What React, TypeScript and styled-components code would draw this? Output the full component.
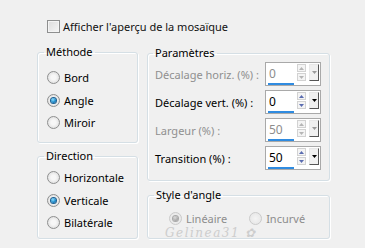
import * as React from 'react';
import styled, { createGlobalStyle } from 'styled-components';

const Global = createGlobalStyle`
  html, body {
    margin: 0;
    padding: 0;
    background: #f0f0f0;
  }
  body {
    font-family: "Noto Sans", "Liberation Sans", sans-serif;
    font-size: 11px;
    color: #111;
  }
`;

const Page = styled.div`
  width: 365px;
  height: 248px;
  box-sizing: border-box;
  padding: 20px 0 0 37px;
`;

const CheckRow = styled.label`
  display: flex;
  align-items: center;
  gap: 3px;
  margin-left: 10px;
  height: 13px;
  line-height: 13px;
`;

const CheckBox = styled.span`
  width: 11px;
  height: 11px;
  border: 1px solid #8e8f8f;
  background: linear-gradient(135deg, #dcdcdc 0%, #f6f6f6 100%);
  box-shadow: inset 0 0 0 1px #f4f4f4;
`;

const Columns = styled.div`
  display: flex;
  gap: 9px;
  margin-top: 12px;
`;

const Column = styled.div<{ $width: number; $shift?: number; $gap: number }>`
  display: flex;
  flex-direction: column;
  gap: ${p => p.$gap}px;
  width: ${p => p.$width}px;
  margin-top: ${p => p.$shift || 0}px;
`;

const Group = styled.fieldset<{ $height: number; $pad: number; $left: number }>`
  margin: 0;
  min-width: 0;
  box-sizing: border-box;
  height: ${p => p.$height}px;
  padding: ${p => p.$pad}px 0 0 ${p => p.$left}px;
  border: 1px solid #d5dfe5;
  border-radius: 3px;
  box-shadow: inset 1px 1px 0 #fff, 1px 1px 0 #fff;
  position: relative;
`;

const Legend = styled.legend<{ $offset: number }>`
  margin-left: ${p => p.$offset}px;
  padding: 0 2px;
  line-height: 14px;
  color: #000;
`;

const RadioList = styled.div`
  display: flex;
  flex-direction: column;
  gap: 9.5px;
`;

const StyleRow = styled.div`
  display: flex;
  gap: 22px;
`;

const RadioRow = styled.div<{ $disabled?: boolean }>`
  display: flex;
  align-items: center;
  gap: 4px;
  height: 13px;
  line-height: 13px;
  color: ${p => (p.$disabled ? '#8d8d8d' : '#000')};
`;

const RadioDot = styled.span<{ $checked?: boolean; $disabled?: boolean }>`
  width: 11px;
  height: 11px;
  border-radius: 50%;
  border: 1px solid ${p => (p.$disabled ? '#cacaca' : '#8e8f8f')};
  background: ${p =>
    p.$disabled
      ? 'radial-gradient(circle at 50% 50%, #f4f4f4, #e4e4e4)'
      : 'radial-gradient(circle at 50% 50%, #f7f7f7 30%, #d6d6d6)'};
  display: flex;
  align-items: center;
  justify-content: center;
  flex: none;

  &::after {
    content: '';
    display: ${p => (p.$checked ? 'block' : 'none')};
    width: 5px;
    height: 5px;
    border-radius: 50%;
    background: ${p =>
      p.$disabled
        ? 'radial-gradient(circle at 40% 35%, #dcdcdc, #8c8c8c)'
        : 'radial-gradient(circle at 40% 35%, #8fe1ff, #1382c6 60%, #0b3c6b)'};
    box-shadow: 0 0 0 1px ${p => (p.$disabled ? '#a8a8a8' : '#1d5f8f')};
  }
`;

const ParamRows = styled.div`
  display: flex;
  flex-direction: column;
  gap: 4px;
  padding: 0 8px 0 7px;
`;

const ParamRow = styled.div<{ $disabled?: boolean }>`
  display: flex;
  align-items: center;
  justify-content: space-between;
  height: 24px;
  white-space: nowrap;
  color: ${p => (p.$disabled ? '#8f8f8f' : '#000')};
`;

const SpinBox = styled.div`
  width: 56px;
  height: 24px;
  box-sizing: border-box;
  border: 1px solid #a9a9a9;
  background: #fff;
  display: flex;
  flex-direction: column;
  padding: 1px 1px 0 1px;
`;

const SpinTop = styled.div`
  display: flex;
  height: 17px;
  gap: 1px;
`;

const Value = styled.span<{ $disabled?: boolean }>`
  flex: 1;
  padding-left: 2px;
  font-size: 12px;
  line-height: 19px;
  color: ${p => (p.$disabled ? '#8d8d8d' : '#000')};
`;

const Arrows = styled.div`
  display: flex;
  flex-direction: column;
  gap: 1px;
  width: 9px;
`;

const ArrowBtn = styled.span`
  height: 8px;
  box-sizing: border-box;
  border: 1px solid #d2d2d2;
  background: #f4f4f4;
  display: flex;
  align-items: center;
  justify-content: center;
`;

const Drop = styled.span`
  width: 10px;
  margin-left: 2px;
  box-sizing: border-box;
  border-left: 1px solid #e8e8e8;
  border-top: 1px solid #e8e8e8;
  border-right: 1px solid #555;
  border-bottom: 1px solid #555;
  background: #f0f0f0;
  display: flex;
  align-items: center;
  justify-content: center;
`;

const Bar = styled.span`
  display: block;
  width: 26px;
  height: 3px;
  margin: 2px 0 0 1px;
  background: #2f8be0;
`;

const Watermark = styled.span`
  position: absolute;
  left: 17px;
  top: 24px;
  font-family: "DejaVu Serif", serif;
  font-style: italic;
  font-size: 12px;
  line-height: 14px;
  letter-spacing: 1.5px;
  color: #cdcdcd;
`;

const Tri = ({ up, color }: { up?: boolean; color: string }) => (
  <svg width="5" height="3" viewBox="0 0 5 3">
    <path d={up ? 'M0 3 L2.5 0 L5 3 Z' : 'M0 0 L5 0 L2.5 3 Z'} fill={color} />
  </svg>
);

function Spinner({ value, disabled }: { value: string; disabled?: boolean }) {
  const arrow = disabled ? '#b5b5b5' : '#5a6cb0';
  return (
    <SpinBox>
      <SpinTop>
        <Value $disabled={disabled}>{value}</Value>
        <Arrows>
          <ArrowBtn><Tri up color={arrow} /></ArrowBtn>
          <ArrowBtn><Tri color={arrow} /></ArrowBtn>
        </Arrows>
        <Drop><Tri color={disabled ? '#9a9a9a' : '#000'} /></Drop>
      </SpinTop>
      <Bar />
    </SpinBox>
  );
}

function Radio({ label, checked, disabled }: { label: string; checked?: boolean; disabled?: boolean }) {
  return (
    <RadioRow $disabled={disabled}>
      <RadioDot $checked={checked} $disabled={disabled} />
      {label}
    </RadioRow>
  );
}

const params = [
  { label: 'Décalage horiz. (%) :', value: '0', disabled: true },
  { label: 'Décalage vert. (%) :', value: '0' },
  { label: 'Largeur (%) :', value: '50', disabled: true },
  { label: 'Transition (%) :', value: '50' },
];

export default function App() {
  return (
    <Page>
      <Global />
      <CheckRow>
        <CheckBox />
        Afficher l'aperçu de la mosaïque
      </CheckRow>
      <Columns>
        <Column $width={101} $gap={6}>
          <Group $height={98} $pad={12} $left={9}>
            <Legend $offset={-3}>Méthode</Legend>
            <RadioList>
              <Radio label="Bord" />
              <Radio label="Angle" checked />
              <Radio label="Miroir" />
            </RadioList>
          </Group>
          <Group $height={90} $pad={8} $left={9}>
            <Legend $offset={-3}>Direction</Legend>
            <RadioList>
              <Radio label="Horizontale" />
              <Radio label="Verticale" checked />
              <Radio label="Bilatérale" />
            </RadioList>
          </Group>
        </Column>
        <Column $width={183} $shift={1} $gap={7}>
          <Group $height={135} $pad={2} $left={0}>
            <Legend $offset={5}>Paramètres</Legend>
            <ParamRows>
              {params.map(p => (
                <ParamRow key={p.label} $disabled={p.disabled}>
                  {p.label}
                  <Spinner value={p.value} disabled={p.disabled} />
                </ParamRow>
              ))}
            </ParamRows>
          </Group>
          <Group $height={51} $pad={10} $left={21}>
            <Legend $offset={-15}>Style d'angle</Legend>
            <StyleRow>
              <Radio label="Linéaire" checked disabled />
              <Radio label="Incurvé" disabled />
            </StyleRow>
            <Watermark>Gelinea31 ✿</Watermark>
          </Group>
        </Column>
      </Columns>
    </Page>
  );
}
